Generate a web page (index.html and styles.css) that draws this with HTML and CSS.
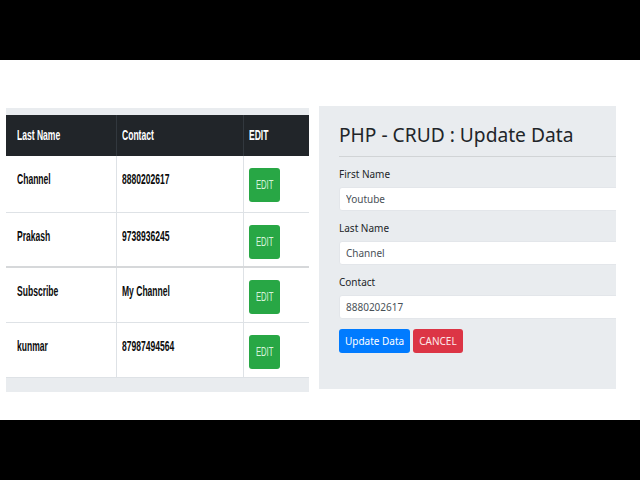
FILE: index.html
```html
<!DOCTYPE html>
<html lang="en">
<head>
<meta charset="utf-8">
<title>PHP - CRUD : Update Data</title>
<link rel="stylesheet" href="styles.css">
</head>
<body>
<div class="bar"></div>
<div class="stage">
  <section class="records">
    <div class="grid head">
      <div class="c c1"><span class="t">Last Name</span></div>
      <div class="c c2"><span class="t">Contact</span></div>
      <div class="c c3"><span class="t">EDIT</span></div>
    </div>
    <div class="grid row r1">
      <div class="c c1"><span class="t">Channel</span></div>
      <div class="c c2"><span class="t">8880202617</span></div>
      <div class="c c3"><button class="edit"><span class="bt">EDIT</span></button></div>
    </div>
    <div class="grid row r2">
      <div class="c c1"><span class="t">Prakash</span></div>
      <div class="c c2"><span class="t">9738936245</span></div>
      <div class="c c3"><button class="edit"><span class="bt">EDIT</span></button></div>
    </div>
    <div class="grid row r3">
      <div class="c c1"><span class="t">Subscribe</span></div>
      <div class="c c2"><span class="t">My Channel</span></div>
      <div class="c c3"><button class="edit"><span class="bt">EDIT</span></button></div>
    </div>
    <div class="grid row r4">
      <div class="c c1"><span class="t">kunmar</span></div>
      <div class="c c2"><span class="t">87987494564</span></div>
      <div class="c c3"><button class="edit"><span class="bt">EDIT</span></button></div>
    </div>
  </section>
  <section class="panel">
    <h1>PHP - CRUD : Update Data</h1>
    <hr>
    <form>
      <div class="group">
        <label>First Name</label>
        <input type="text" value="Youtube">
      </div>
      <div class="group">
        <label>Last Name</label>
        <input type="text" value="Channel">
      </div>
      <div class="group">
        <label>Contact</label>
        <input type="text" value="8880202617">
      </div>
      <div class="actions">
        <button type="button" class="btn primary">Update Data</button>
        <button type="button" class="btn danger">CANCEL</button>
      </div>
    </form>
  </section>
</div>
<div class="bar"></div>
</body>
</html>
```
FILE: styles.css
```css
html, body {
  margin: 0;
  padding: 0;
  background: #fff;
}
body {
  font-family: "Noto Sans", "Liberation Sans", sans-serif;
  color: #212529;
}
.bar {
  height: 60px;
  background: #000;
}
.stage {
  height: 360px;
  display: flex;
  align-items: flex-start;
  overflow: hidden;
}

/* ---- table ---- */
.records {
  margin: 48px 0 0 6px;
  width: 303px;
  background: #e9ecef;
  padding: 7px 0 14px;
}
.grid {
  display: grid;
  grid-template-columns: 110px 127px 1fr;
}
.c {
  display: flex;
  font-family: "Liberation Sans", Arial, sans-serif;
  font-weight: bold;
  font-size: 14px;
  line-height: 17px;
  white-space: nowrap;
  overflow: hidden;
}
.c1 { padding-left: 11px; }
.c2, .c3 { padding-left: 5px; }
.t {
  display: inline-block;
  transform: scaleX(0.61);
  transform-origin: 0 50%;
}
.head {
  height: 41px;
  background: #212529;
  color: #fff;
}
.head .c {
  align-items: center;
}
.head .c2, .head .c3 {
  border-left: 1px solid #32383e;
}
.row {
  background: #fff;
  border-bottom: 1px solid #dee2e6;
  color: #0c0c0c;
}
.row .c {
  align-items: flex-start;
}
.row .c2, .row .c3 {
  border-left: 1px solid #dee2e6;
}
.row .c1, .row .c2 {
  padding-top: 15px;
}
.r1 { height: 56px; }
.r2 { height: 53px; border-bottom: 2px solid #d6d8da; }
.r3 { height: 54px; }
.r4 { height: 54px; }
.edit {
  margin-top: 12px;
  width: 31px;
  height: 34px;
  padding: 0;
  border: 0;
  border-radius: 3px;
  background: #28a745;
  color: #d8f3dc;
  display: flex;
  align-items: center;
  justify-content: center;
  overflow: hidden;
}
.bt {
  display: inline-block;
  font-family: "Liberation Sans", Arial, sans-serif;
  font-size: 12px;
  font-weight: normal;
  transform: scaleX(0.64);
}

/* ---- form panel ---- */
.panel {
  margin: 46px 0 0 10px;
  width: 297px;
  height: 283px;
  box-sizing: border-box;
  background: #e9ecef;
  padding: 17px 0 0 20px;
  overflow: hidden;
}
.panel h1 {
  margin: 0;
  font-size: 19.2px;
  line-height: 24px;
  font-weight: 400;
  color: #212529;
  white-space: nowrap;
}
.panel hr {
  margin: 9px 0 10px;
  border: 0;
  border-top: 1px solid rgba(0, 0, 0, 0.1);
}
.group {
  margin-bottom: 10px;
}
.group label {
  display: block;
  font-size: 10px;
  line-height: 15px;
  margin-bottom: 5px;
  color: #212529;
}
.group input {
  display: block;
  width: 300px;
  height: 24px;
  box-sizing: border-box;
  border: 1px solid #e3e6ea;
  border-radius: 3px;
  padding: 0 6px;
  font-family: inherit;
  font-size: 10px;
  color: #495057;
  background: #fff;
  outline: none;
}
.actions {
  display: flex;
  gap: 3px;
}
.btn {
  height: 24px;
  border: 0;
  border-radius: 3px;
  padding: 0 6px;
  font-family: inherit;
  font-size: 10px;
  color: #fff;
}
.primary { background: #007bff; }
.danger { background: #dc3545; color: #fde8ea; }
```
